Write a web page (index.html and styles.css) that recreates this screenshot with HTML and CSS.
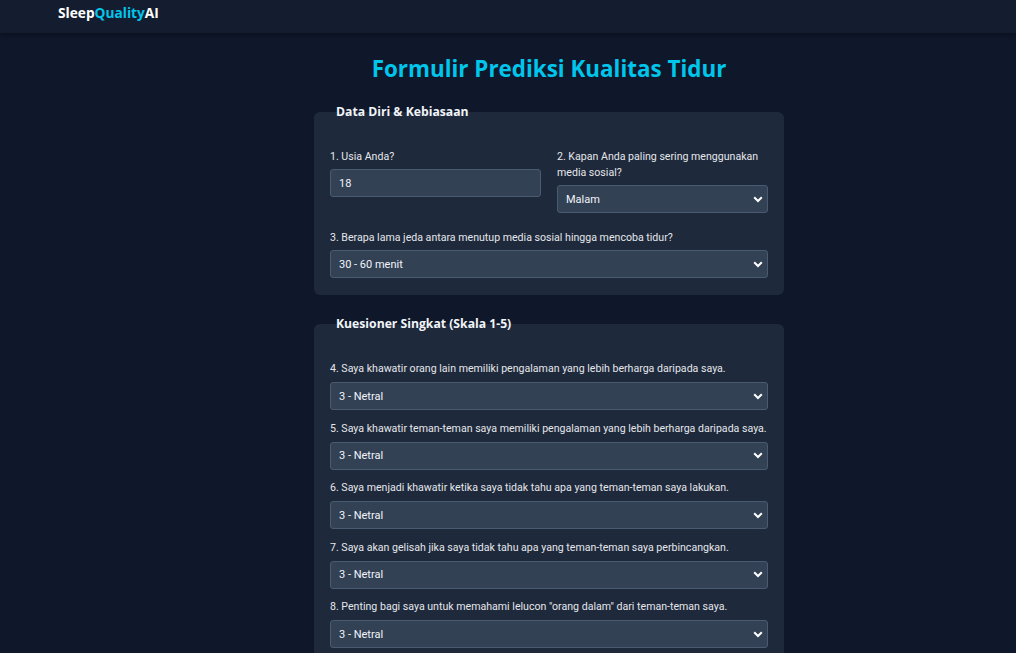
FILE: index.html
```html
<!DOCTYPE html>
<html lang="id">
<head>
<meta charset="utf-8">
<title>SleepQualityAI</title>
<link rel="stylesheet" href="styles.css">
</head>
<body>
<header class="topbar">
  <div class="logo">Sleep<span class="accent">Quality</span>AI</div>
</header>
<main class="main">
  <h1 class="title">Formulir Prediksi Kualitas Tidur</h1>
  <form class="form">
    <fieldset class="card card-basic">
      <legend class="card-title">Data Diri &amp; Kebiasaan</legend>
      <div class="row">
        <div class="field">
          <label class="label">1. Usia Anda?</label>
          <input class="control" type="text" value="18">
        </div>
        <div class="field">
          <label class="label">2. Kapan Anda paling sering menggunakan media sosial?</label>
          <select class="control select"><option>Malam</option></select>
        </div>
      </div>
      <div class="field">
        <label class="label">3. Berapa lama jeda antara menutup media sosial hingga mencoba tidur?</label>
        <select class="control select"><option>30 - 60 menit</option></select>
      </div>
    </fieldset>
    <fieldset class="card">
      <legend class="card-title">Kuesioner Singkat (Skala 1-5)</legend>
      <div class="field q">
        <label class="label">4. Saya khawatir orang lain memiliki pengalaman yang lebih berharga daripada saya.</label>
        <select class="control select"><option>3 - Netral</option></select>
      </div>
      <div class="field q">
        <label class="label">5. Saya khawatir teman-teman saya memiliki pengalaman yang lebih berharga daripada saya.</label>
        <select class="control select"><option>3 - Netral</option></select>
      </div>
      <div class="field q">
        <label class="label">6. Saya menjadi khawatir ketika saya tidak tahu apa yang teman-teman saya lakukan.</label>
        <select class="control select"><option>3 - Netral</option></select>
      </div>
      <div class="field q">
        <label class="label">7. Saya akan gelisah jika saya tidak tahu apa yang teman-teman saya perbincangkan.</label>
        <select class="control select"><option>3 - Netral</option></select>
      </div>
      <div class="field q">
        <label class="label">8. Penting bagi saya untuk memahami lelucon "orang dalam" dari teman-teman saya.</label>
        <select class="control select"><option>3 - Netral</option></select>
      </div>
    </fieldset>
  </form>
</main>
</body>
</html>
```
FILE: styles.css
```css
* { box-sizing: border-box; }
html, body { margin: 0; padding: 0; }
body {
  background: #0f172a;
  color: #e5e7eb;
  font-family: Roboto, "Open Sans", sans-serif;
  font-size: 12px;
}
.topbar {
  height: 33px;
  background: #141d30;
  box-shadow: 0 2px 5px rgba(0, 0, 0, 0.35);
  padding: 4px 58px 0;
}
.logo {
  font-family: "Open Sans", sans-serif;
  font-weight: 700;
  font-size: 13.7px;
  line-height: 18px;
  color: #ffffff;
}
.accent { color: #00c6ec; }
.main {
  width: 470px;
  margin-left: 314px;
  padding-top: 21px;
}
.title {
  margin: 0 0 18px;
  text-align: center;
  font-family: "Open Sans", sans-serif;
  font-size: 22.4px;
  line-height: 30px;
  font-weight: 700;
  color: #00c6ec;
}
.card {
  margin: 0 0 19px;
  border: none;
  border-radius: 6px;
  background: #1e293b;
  padding: 27px 16px 16px;
  min-width: 0;
}
.card-basic { padding-bottom: 17px; }
.card-title {
  padding: 0 6px;
  font-family: "Open Sans", sans-serif;
  font-weight: 700;
  font-size: 12.2px;
  line-height: 20px;
  color: #f1f5f9;
}
.row {
  display: grid;
  grid-template-columns: 1fr 1fr;
  column-gap: 16px;
  margin-bottom: 17px;
}
.field { display: flex; flex-direction: column; }
.q { margin-bottom: 10.5px; }
.label {
  display: block;
  font-size: 10.6px;
  line-height: 16px;
  margin-bottom: 5px;
  color: #e5e7eb;
}
.card-basic .label { margin-bottom: 4px; }
.q .label { white-space: nowrap; }
.control {
  display: block;
  width: 100%;
  height: 28px;
  background: #334155;
  border: 1px solid #4a5a70;
  border-radius: 3px;
  color: #f1f5f9;
  font-family: inherit;
  font-size: 11px;
  padding: 0 8px;
  margin: 0;
  outline: none;
}
.select {
  appearance: none;
  -webkit-appearance: none;
  background-image: url("data:image/svg+xml,%3Csvg xmlns='http://www.w3.org/2000/svg' width='10' height='7' viewBox='0 0 10 7'%3E%3Cpath d='M1.2 1.3 L5 5 L8.8 1.3' fill='none' stroke='%23ffffff' stroke-width='2'/%3E%3C/svg%3E");
  background-repeat: no-repeat;
  background-position: right 4px center;
  background-size: 10px 7px;
}
```
